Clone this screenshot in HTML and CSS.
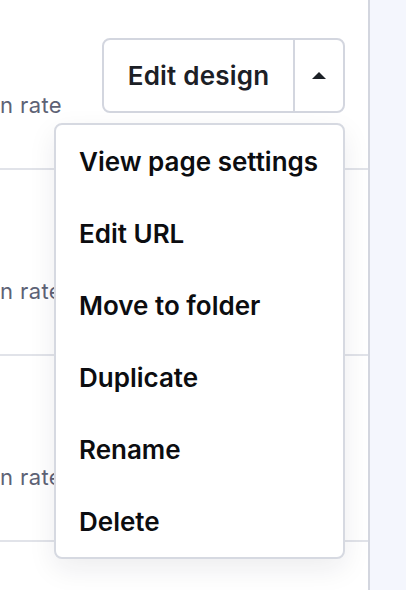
FILE: index.html
```html
<!DOCTYPE html>
<html lang="en">
<head>
<meta charset="utf-8">
<title>Pages</title>
<link rel="stylesheet" href="styles.css">
</head>
<body>
<div class="layout">
  <main class="list">
    <div class="row row-first">
      <div class="stat">
        <span class="stat-label">Conversion rate</span>
      </div>
      <div class="actions">
        <div class="split-btn">
          <button class="split-main">Edit design</button>
          <button class="split-toggle" aria-label="More actions"><span class="caret-up"></span></button>
        </div>
        <ul class="menu">
          <li class="menu-item">View page settings</li>
          <li class="menu-item">Edit URL</li>
          <li class="menu-item">Move to folder</li>
          <li class="menu-item">Duplicate</li>
          <li class="menu-item">Rename</li>
          <li class="menu-item">Delete</li>
        </ul>
      </div>
    </div>
    <div class="row">
      <div class="stat">
        <span class="stat-label">Conversion rate</span>
      </div>
    </div>
    <div class="row">
      <div class="stat">
        <span class="stat-label">Conversion rate</span>
      </div>
    </div>
    <div class="row"></div>
  </main>
  <aside class="side"></aside>
</div>
</body>
</html>
```
FILE: styles.css
```css
* { box-sizing: border-box; }

html, body {
  margin: 0;
  padding: 0;
  height: 100%;
  overflow: hidden;
  background: #ffffff;
  font-family: Inter, "Noto Sans", sans-serif;
}

.layout {
  display: flex;
  height: 100%;
}

.list {
  width: 370px;
  flex: none;
  border-right: 2px solid #d3d6df;
  background: #ffffff;
}

.side {
  flex: 1;
  background: #f4f6fd;
}

.row {
  height: 186px;
  display: flex;
  align-items: flex-start;
  padding-top: 54px;
  border-bottom: 2px solid #e1e3e9;
}

.row-first {
  height: 170px;
  padding-top: 38px;
}

.stat {
  width: 62px;
  height: 78px;
  flex: none;
  display: flex;
  justify-content: flex-end;
  align-items: flex-end;
  overflow: visible;
}

.stat-label {
  white-space: nowrap;
  font-size: 22px;
  line-height: 22px;
  letter-spacing: 0.4px;
  color: #5d6275;
}

.actions {
  position: relative;
  margin-left: 40px;
  z-index: 5;
}

.split-btn {
  display: flex;
  height: 75px;
  width: 243px;
  border: 2px solid #d3d6df;
  border-radius: 8px;
  background: #ffffff;
}

.split-btn button {
  font: inherit;
  background: transparent;
  border: 0;
  padding: 0;
  margin: 0;
  color: #1c2026;
}

.split-main {
  width: 191px;
  font-size: 26px !important;
  font-weight: 600 !important;
  letter-spacing: 0.2px;
  border-right: 2px solid #d3d6df !important;
}

.split-toggle {
  flex: 1;
  display: flex;
  align-items: center;
  justify-content: center;
}

.caret-up {
  width: 0;
  height: 0;
  border-left: 7px solid transparent;
  border-right: 7px solid transparent;
  border-bottom: 7px solid #1c2026;
}

.menu {
  position: absolute;
  top: 85px;
  right: 0;
  width: 291px;
  margin: 0;
  padding: 0;
  list-style: none;
  background: #ffffff;
  border: 2px solid #d6d9e1;
  border-radius: 8px;
  box-shadow: 0 10px 28px rgba(20, 28, 50, 0.08);
}

.menu-item {
  height: 72px;
  display: flex;
  align-items: center;
  padding-left: 23px;
  font-size: 26px;
  font-weight: 600;
  color: #0c0d10;
  white-space: nowrap;
}
```
